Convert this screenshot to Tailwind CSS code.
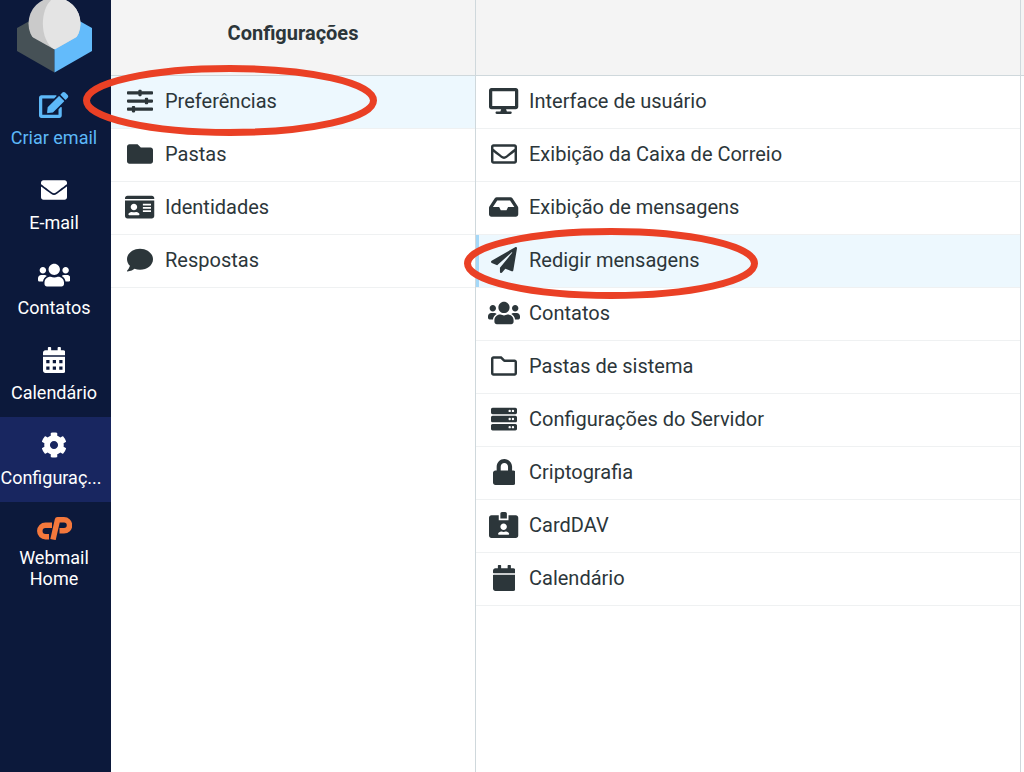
<!DOCTYPE html>
<html lang="pt-BR">
<head>
<meta charset="utf-8">
<meta name="viewport" content="width=device-width, initial-scale=1">
<title>Configurações</title>
<script src="https://cdn.jsdelivr.net/npm/@tailwindcss/browser@4"></script>
</head>
<body class="relative flex h-screen overflow-hidden bg-white font-[Roboto,sans-serif] text-xl text-[#2c363a]">

<nav aria-label="Tarefas" class="flex w-[111px] shrink-0 flex-col bg-[#0c193b] text-lg leading-[21px] text-white">
  <svg class="block h-[77px] w-full" viewBox="0 0 111 77" aria-hidden="true">
    <path fill="#465156" d="M17 28 54.500 7V72.500L17 51Z"/>
    <path fill="#63bbfb" d="M92 28 54.500 7V72.500L92 51Z"/>
    <clipPath id="bowl"><path d="M0-10H111V17.500L54.500 49.500 0 19Z"/></clipPath>
    <g clip-path="url(#bowl)">
      <circle cx="54.500" cy="23.500" r="26" fill="#cacaca"/>
      <path fill="#e4e4e4" d="M54.500-2.500A26 26 0 0 1 54.500 49.500C39 41 39 6 54.500-2.500Z"/>
    </g>
  </svg>
  <a href="#" class="flex h-[85px] flex-col items-center gap-[9px] pt-[15px] pr-[3px] text-[#5db8f8]">
    <svg class="h-[26px]" fill="currentColor" viewBox="0 0 576 512" aria-hidden="true"><path d="M402.600 83.200l90.200 90.200c3.800 3.800 3.800 10 0 13.800L274.400 405.600l-92.800 10.300c-12.400 1.400-22.900-9.100-21.500-21.500l10.300-92.800L388.800 83.200c3.800-3.800 10-3.800 13.800 0zm162-22.900l-48.800-48.800c-15.200-15.200-39.900-15.200-55.200 0l-35.400 35.400c-3.800 3.800-3.800 10 0 13.800l90.200 90.200c3.800 3.800 10 3.800 13.800 0l35.400-35.400c15.200-15.300 15.200-40 0-55.200zM384 346.200V448H64V128h229.800c3.200 0 6.200-1.300 8.500-3.500l40-40c7.600-7.600 2.200-20.500-8.500-20.500H48C21.500 64 0 85.500 0 112v352c0 26.500 21.500 48 48 48h352c26.500 0 48-21.500 48-48V306.200c0-10.700-12.900-16-20.500-8.500l-40 40c-2.200 2.300-3.500 5.300-3.500 8.500z"/></svg>
    <span>Criar email</span>
  </a>
  <a href="#" class="flex h-[85px] flex-col items-center gap-[9px] pt-[15px] pr-[3px]">
    <svg class="h-[26px]" fill="currentColor" viewBox="0 0 512 512" aria-hidden="true"><path d="M502.300 190.800c3.900-3.100 9.700-.2 9.700 4.700V400c0 26.500-21.500 48-48 48H48c-26.500 0-48-21.500-48-48V195.600c0-5 5.700-7.800 9.700-4.700 22.400 17.400 52.100 39.500 154.100 113.600 21.100 15.400 56.700 47.800 92.200 47.600 35.700.3 72-32.800 92.300-47.600 102-74.100 131.600-96.300 154-113.700zM256 320c23.200.4 56.600-29.200 73.400-41.400 132.700-96.300 142.800-104.700 173.400-128.700 5.800-4.500 9.200-11.500 9.200-18.900v-19c0-26.500-21.500-48-48-48H48c-26.500 0-48 21.500-48 48v19c0 7.400 3.400 14.300 9.200 18.900 30.600 23.900 40.700 32.400 173.400 128.700 16.800 12.200 50.200 41.800 73.400 41.400z"/></svg>
    <span>E-mail</span>
  </a>
  <a href="#" class="flex h-[85px] flex-col items-center gap-[9px] pt-[15px] pr-[3px]">
    <svg class="h-[26px]" fill="currentColor" viewBox="0 0 640 512" aria-hidden="true"><path id="users" d="M96 224c35.300 0 64-28.700 64-64s-28.700-64-64-64-64 28.700-64 64 28.700 64 64 64zm448 0c35.300 0 64-28.700 64-64s-28.700-64-64-64-64 28.700-64 64 28.700 64 64 64zm32 32h-64c-17.600 0-33.500 7.100-45.100 18.600 40.300 22.100 68.900 62 75.100 109.400h66c17.700 0 32-14.300 32-32v-32c0-35.300-28.700-64-64-64zm-256 0c61.900 0 112-50.100 112-112S381.900 32 320 32 208 82.100 208 144s50.100 112 112 112zm76.800 32h-8.300c-20.800 10-43.900 16-68.500 16s-47.600-6-68.500-16h-8.300C179.600 288 128 339.600 128 403.200V432c0 26.500 21.500 48 48 48h288c26.500 0 48-21.500 48-48v-28.800c0-63.600-51.600-115.200-115.200-115.200zm-223.700-13.400C161.500 263.100 145.600 256 128 256H64c-35.300 0-64 28.700-64 64v32c0 17.700 14.300 32 32 32h65.900c6.300-47.400 34.900-87.300 75.200-109.400z"/></svg>
    <span>Contatos</span>
  </a>
  <a href="#" class="flex h-[85px] flex-col items-center gap-[9px] pt-[15px] pr-[3px]">
    <svg class="h-[26px]" fill="currentColor" viewBox="0 0 448 512" aria-hidden="true"><path fill-rule="evenodd" d="M0 464c0 26.500 21.500 48 48 48h352c26.500 0 48-21.500 48-48V192H0zM64 256h64v64H64zM192 256h64v64h-64zM320 256h64v64h-64zM64 384h64v64H64zM192 384h64v64h-64zM320 384h64v64h-64zM400 64h-48V16c0-8.800-7.200-16-16-16h-32c-8.800 0-16 7.200-16 16v48H160V16c0-8.800-7.200-16-16-16h-32c-8.800 0-16 7.200-16 16v48H48C21.500 64 0 85.500 0 112v48h448v-48c0-26.500-21.500-48-48-48z"/></svg>
    <span>Calendário</span>
  </a>
  <a href="#" aria-current="page" class="flex h-[85px] flex-col items-center gap-[9px] bg-[#182660] pt-[15px] pr-[3px]">
    <svg class="h-[26px]" fill="currentColor" viewBox="0 0 512 512" aria-hidden="true"><path d="M487.400 315.700l-42.600-24.600c4.300-23.200 4.300-47 0-70.200l42.600-24.600c4.900-2.800 7.100-8.600 5.500-14-11.100-35.600-30-67.800-54.700-94.600-3.800-4.100-10-5.100-14.800-2.300L380.800 110c-17.900-15.400-38.500-27.300-60.800-35.100V25.800c0-5.600-3.900-10.500-9.400-11.700-36.700-8.200-74.300-7.800-109.200 0-5.500 1.200-9.400 6.100-9.400 11.700V75c-22.200 7.900-42.800 19.800-60.800 35.100L88.700 85.500c-4.900-2.800-11-1.900-14.800 2.300-24.700 26.700-43.600 58.900-54.700 94.600-1.700 5.400.6 11.200 5.500 14L67.300 221c-4.300 23.200-4.300 47 0 70.200l-42.600 24.600c-4.900 2.800-7.100 8.600-5.500 14 11.100 35.600 30 67.800 54.700 94.600 3.800 4.100 10 5.100 14.800 2.300l42.600-24.600c17.900 15.400 38.500 27.300 60.800 35.100v49.200c0 5.600 3.900 10.500 9.400 11.700 36.700 8.200 74.300 7.800 109.200 0 5.500-1.200 9.400-6.100 9.400-11.700v-49.200c22.200-7.900 42.800-19.800 60.800-35.100l42.600 24.600c4.900 2.800 11 1.900 14.800-2.300 24.700-26.700 43.600-58.900 54.700-94.600 1.500-5.500-.7-11.300-5.600-14.100zM256 336c-44.100 0-80-35.900-80-80s35.900-80 80-80 80 35.900 80 80-35.900 80-80 80z"/></svg>
    <span class="-ml-1.5">Configuraç...</span>
  </a>
  <a href="#" class="flex flex-col items-center gap-[7px] pt-[14px] pr-[3px] text-center">
    <svg class="h-6 w-9" viewBox="0 0 36 24" fill="none" stroke="#f4783c" stroke-width="5.500" aria-hidden="true"><path d="M16 9.300H9.500a5.700 5.700 0 0 0 0 11.400H13"/><path stroke-linejoin="round" d="M17 23.500 21.500 3.800H28a5.500 5.500 0 0 1 0 11H23.500"/></svg>
    <span class="w-20">Webmail Home</span>
  </a>
</nav>

<section class="w-[365px] shrink-0 border-r border-[#cfd8dc]">
  <h1 class="flex h-[76px] items-center justify-center border-b border-[#cfd8dc] bg-[#f4f4f4] pb-2.5 font-bold">Configurações</h1>
  <ul class="[&_a]:flex [&_a]:h-[53px] [&_a]:items-center [&_a]:gap-[9px] [&_a]:border-b [&_a]:border-[#eff1f2] [&_a]:pb-0.5 [&_a]:pl-[13px] [&_span]:flex [&_span]:w-8 [&_span]:justify-center [&_svg]:h-[26px] [&_svg]:fill-current">
    <li><a href="#" class="bg-[#edf8fe]"><span><svg viewBox="0 0 512 512" aria-hidden="true"><path d="M496 384H160v-16c0-8.800-7.200-16-16-16h-32c-8.800 0-16 7.200-16 16v16H16c-8.800 0-16 7.200-16 16v32c0 8.800 7.200 16 16 16h80v16c0 8.800 7.200 16 16 16h32c8.800 0 16-7.200 16-16v-16h336c8.800 0 16-7.200 16-16v-32c0-8.800-7.200-16-16-16zm0-160h-80v-16c0-8.800-7.200-16-16-16h-32c-8.800 0-16 7.200-16 16v16H16c-8.800 0-16 7.200-16 16v32c0 8.800 7.200 16 16 16h336v16c0 8.800 7.200 16 16 16h32c8.800 0 16-7.200 16-16v-16h80c8.800 0 16-7.200 16-16v-32c0-8.800-7.200-16-16-16zm0-160H288V48c0-8.800-7.200-16-16-16h-32c-8.800 0-16 7.200-16 16v16H16C7.200 64 0 71.200 0 80v32c0 8.800 7.200 16 16 16h208v16c0 8.800 7.200 16 16 16h32c8.800 0 16-7.200 16-16v-16h208c8.800 0 16-7.200 16-16V80c0-8.800-7.200-16-16-16z"/></svg></span>Preferências</a></li>
    <li><a href="#"><span><svg viewBox="0 0 512 512" aria-hidden="true"><path d="M464 128H272l-64-64H48C21.500 64 0 85.500 0 112v288c0 26.500 21.500 48 48 48h416c26.500 0 48-21.500 48-48V176c0-26.500-21.500-48-48-48z"/></svg></span>Pastas</a></li>
    <li><a href="#"><span><svg viewBox="0 0 576 512" aria-hidden="true"><path fill-rule="evenodd" d="M528 32H48C21.500 32 0 53.500 0 80v16h576V80c0-26.500-21.500-48-48-48zM0 432c0 26.500 21.500 48 48 48h480c26.500 0 48-21.500 48-48V128H0zM352 192h160v32H352zM352 256h160v32H352zM352 320h160v32H352zM176 192c35.300 0 64 28.700 64 64s-28.700 64-64 64-64-28.700-64-64 28.700-64 64-64zM67.100 396.200C75.500 370.500 99.600 352 128 352h8.200c12.300 5.100 25.700 8 39.800 8s27.600-2.900 39.800-8h8.200c28.400 0 52.500 18.500 60.900 44.200 3.200 9.900-5.200 19.800-15.600 19.800H82.700c-10.400 0-18.800-10-15.600-19.800z"/></svg></span>Identidades</a></li>
    <li><a href="#"><span><svg viewBox="0 0 512 512" aria-hidden="true"><path d="M256 32C114.600 32 0 125.100 0 240c0 49.600 21.400 95 57 130.700C44.500 421.100 2.700 466 2.200 466.500c-2.200 2.300-2.800 5.700-1.500 8.700S4.800 480 8 480c66.300 0 116-31.800 140.600-51.400 32.700 12.300 69 19.400 107.400 19.400 141.400 0 256-93.100 256-208S397.400 32 256 32z"/></svg></span>Respostas</a></li>
  </ul>
</section>

<section class="min-w-0 flex-1 border-r border-[#cfd8dc]">
  <div class="h-[76px] border-b border-[#cfd8dc] bg-[#f4f4f4]"></div>
  <ul class="[&_a]:flex [&_a]:h-[53px] [&_a]:items-center [&_a]:gap-[9px] [&_a]:border-b [&_a]:border-[#eff1f2] [&_a]:pb-0.5 [&_a]:pl-3 [&_span]:flex [&_span]:w-8 [&_span]:justify-center [&_svg]:h-[26px] [&_svg]:fill-current">
    <li><a href="#"><span><svg viewBox="0 0 576 512" aria-hidden="true"><path d="M528 0H48C21.500 0 0 21.500 0 48v320c0 26.500 21.500 48 48 48h192l-16 48h-72c-13.300 0-24 10.700-24 24s10.700 24 24 24h272c13.300 0 24-10.700 24-24s-10.700-24-24-24h-72l-16-48h192c26.500 0 48-21.500 48-48V48c0-26.500-21.500-48-48-48zm-16 352H64V64h448v288z"/></svg></span>Interface de usuário</a></li>
    <li><a href="#"><span><svg viewBox="0 0 512 512" aria-hidden="true"><path d="M464 64H48C21.490 64 0 85.490 0 112v288c0 26.510 21.490 48 48 48h416c26.510 0 48-21.490 48-48V112c0-26.510-21.490-48-48-48zm0 48v40.805c-22.422 18.259-58.168 46.651-134.587 106.490-16.841 13.247-50.201 45.072-73.413 44.701-23.208.375-56.579-31.459-73.413-44.701C106.180 199.465 70.425 171.067 48 152.805V112h416zM48 400V214.398c22.914 18.251 55.409 43.862 104.938 82.646 21.857 17.205 60.134 55.186 103.062 54.955 42.717.231 80.509-37.199 103.053-54.947 49.528-38.783 82.032-64.401 104.947-82.653V400H48z"/></svg></span>Exibição da Caixa de Correio</a></li>
    <li><a href="#"><span><svg viewBox="0 0 576 512" aria-hidden="true"><path d="M567.938 243.908L462.250 85.374A48.003 48.003 0 0 0 422.311 64H153.689a48 48 0 0 0-39.938 21.374L8.062 243.908A47.994 47.994 0 0 0 0 270.533V400c0 26.510 21.490 48 48 48h480c26.510 0 48-21.490 48-48V270.533a47.994 47.994 0 0 0-8.062-26.625zM162.252 128h251.497l85.333 128H376l-32 64H232l-32-64H76.918l85.334-128z"/></svg></span>Exibição de mensagens</a></li>
    <li><a href="#" class="bg-[#edf8fe] shadow-[inset_3px_0_0_#a5d8f8]"><span><svg viewBox="0 0 512 512" aria-hidden="true"><path d="M476 3.200L12.500 270.600c-18.100 10.400-15.800 35.600 2.200 43.200L121 358.400l287.300-253.200c5.500-4.900 13.300 2.600 8.600 8.300L176 407v80.500c0 23.600 28.500 32.900 42.500 15.800L282 426l124.600 52.200c14.200 6 30.400-2.900 33-18.200l72-432C515 7.800 493.300-6.800 476 3.200z"/></svg></span>Redigir mensagens</a></li>
    <li><a href="#"><span><svg viewBox="0 0 640 512" aria-hidden="true"><use href="#users"/></svg></span>Contatos</a></li>
    <li><a href="#"><span><svg viewBox="0 0 512 512" aria-hidden="true"><path d="M464 128H272l-54.630-54.630c-6-6-14.140-9.370-22.630-9.370H48C21.490 64 0 85.490 0 112v288c0 26.510 21.490 48 48 48h416c26.510 0 48-21.490 48-48V176c0-26.510-21.490-48-48-48zm0 272H48V112h140.120l54.630 54.630c6 6 14.140 9.370 22.630 9.370H464v224z"/></svg></span>Pastas de sistema</a></li>
    <li><a href="#"><span><svg viewBox="0 0 512 512" aria-hidden="true"><g id="unit"><path fill-rule="evenodd" d="M480 160H32c-17.673 0-32-14.327-32-32V64c0-17.673 14.327-32 32-32h448c17.673 0 32 14.327 32 32v64c0 17.673-14.327 32-32 32zM432 72a24 24 0 1 0 0 48 24 24 0 0 0 0-48zM368 72a24 24 0 1 0 0 48 24 24 0 0 0 0-48z"/></g><use href="#unit" y="160"/><use href="#unit" y="320"/></svg></span>Configurações do Servidor</a></li>
    <li><a href="#"><span><svg viewBox="0 0 448 512" aria-hidden="true"><path d="M400 224h-24v-72C376 68.200 307.800 0 224 0S72 68.200 72 152v72H48c-26.500 0-48 21.500-48 48v192c0 26.500 21.500 48 48 48h352c26.500 0 48-21.500 48-48V272c0-26.500-21.500-48-48-48zm-104 0H152v-72c0-39.700 32.300-72 72-72s72 32.300 72 72v72z"/></svg></span>Criptografia</a></li>
    <li><a href="#"><span><svg viewBox="0 0 576 512" aria-hidden="true"><path d="M528 64H384v96H192V64H48C21.500 64 0 85.500 0 112v352c0 26.500 21.500 48 48 48h480c26.500 0 48-21.500 48-48V112c0-26.500-21.500-48-48-48zM288 224c35.300 0 64 28.700 64 64s-28.700 64-64 64-64-28.700-64-64 28.700-64 64-64zm93.300 224H194.700c-10.400 0-18.800-10-15.600-19.800 8.300-25.600 32.400-44.200 60.900-44.200h8.200c12.300 5.100 25.700 8 39.800 8s27.600-2.900 39.800-8h8.200c28.400 0 52.500 18.500 60.900 44.200 3.200 9.900-5.200 19.800-15.600 19.800zM352 32c0-17.700-14.300-32-32-32h-64c-17.700 0-32 14.300-32 32v96h128V32z"/></svg></span>CardDAV</a></li>
    <li><a href="#"><span><svg viewBox="0 0 448 512" aria-hidden="true"><path d="M12 192h424c6.600 0 12 5.400 12 12v260c0 26.500-21.500 48-48 48H48c-26.500 0-48-21.500-48-48V204c0-6.600 5.400-12 12-12zm436-44v-36c0-26.500-21.500-48-48-48h-48V12c0-6.600-5.400-12-12-12h-40c-6.600 0-12 5.400-12 12v52H160V12c0-6.600-5.400-12-12-12h-40c-6.600 0-12 5.400-12 12v52H48C21.500 64 0 85.500 0 112v36c0 6.600 5.400 12 12 12h424c6.600 0 12-5.400 12-12z"/></svg></span>Calendário</a></li>
  </ul>
</section>

<div class="w-[3px] shrink-0"><div class="h-[76px] border-b border-[#cfd8dc] bg-[#f4f4f4]"></div></div>

<!-- Hand-drawn style highlights over the two menu choices -->
<svg class="pointer-events-none absolute top-[65px] left-[83px] h-[71px] w-[294px]" viewBox="0 0 294 71" fill="none" stroke="#ea4025" stroke-width="7" aria-hidden="true"><ellipse cx="147" cy="35.500" rx="143.500" ry="32"/></svg>
<svg class="pointer-events-none absolute top-[228px] left-[464px] h-[71px] w-[294px]" viewBox="0 0 294 71" fill="none" stroke="#ea4025" stroke-width="7" aria-hidden="true"><ellipse cx="147" cy="35.500" rx="143.500" ry="32"/></svg>
</body>
</html>
